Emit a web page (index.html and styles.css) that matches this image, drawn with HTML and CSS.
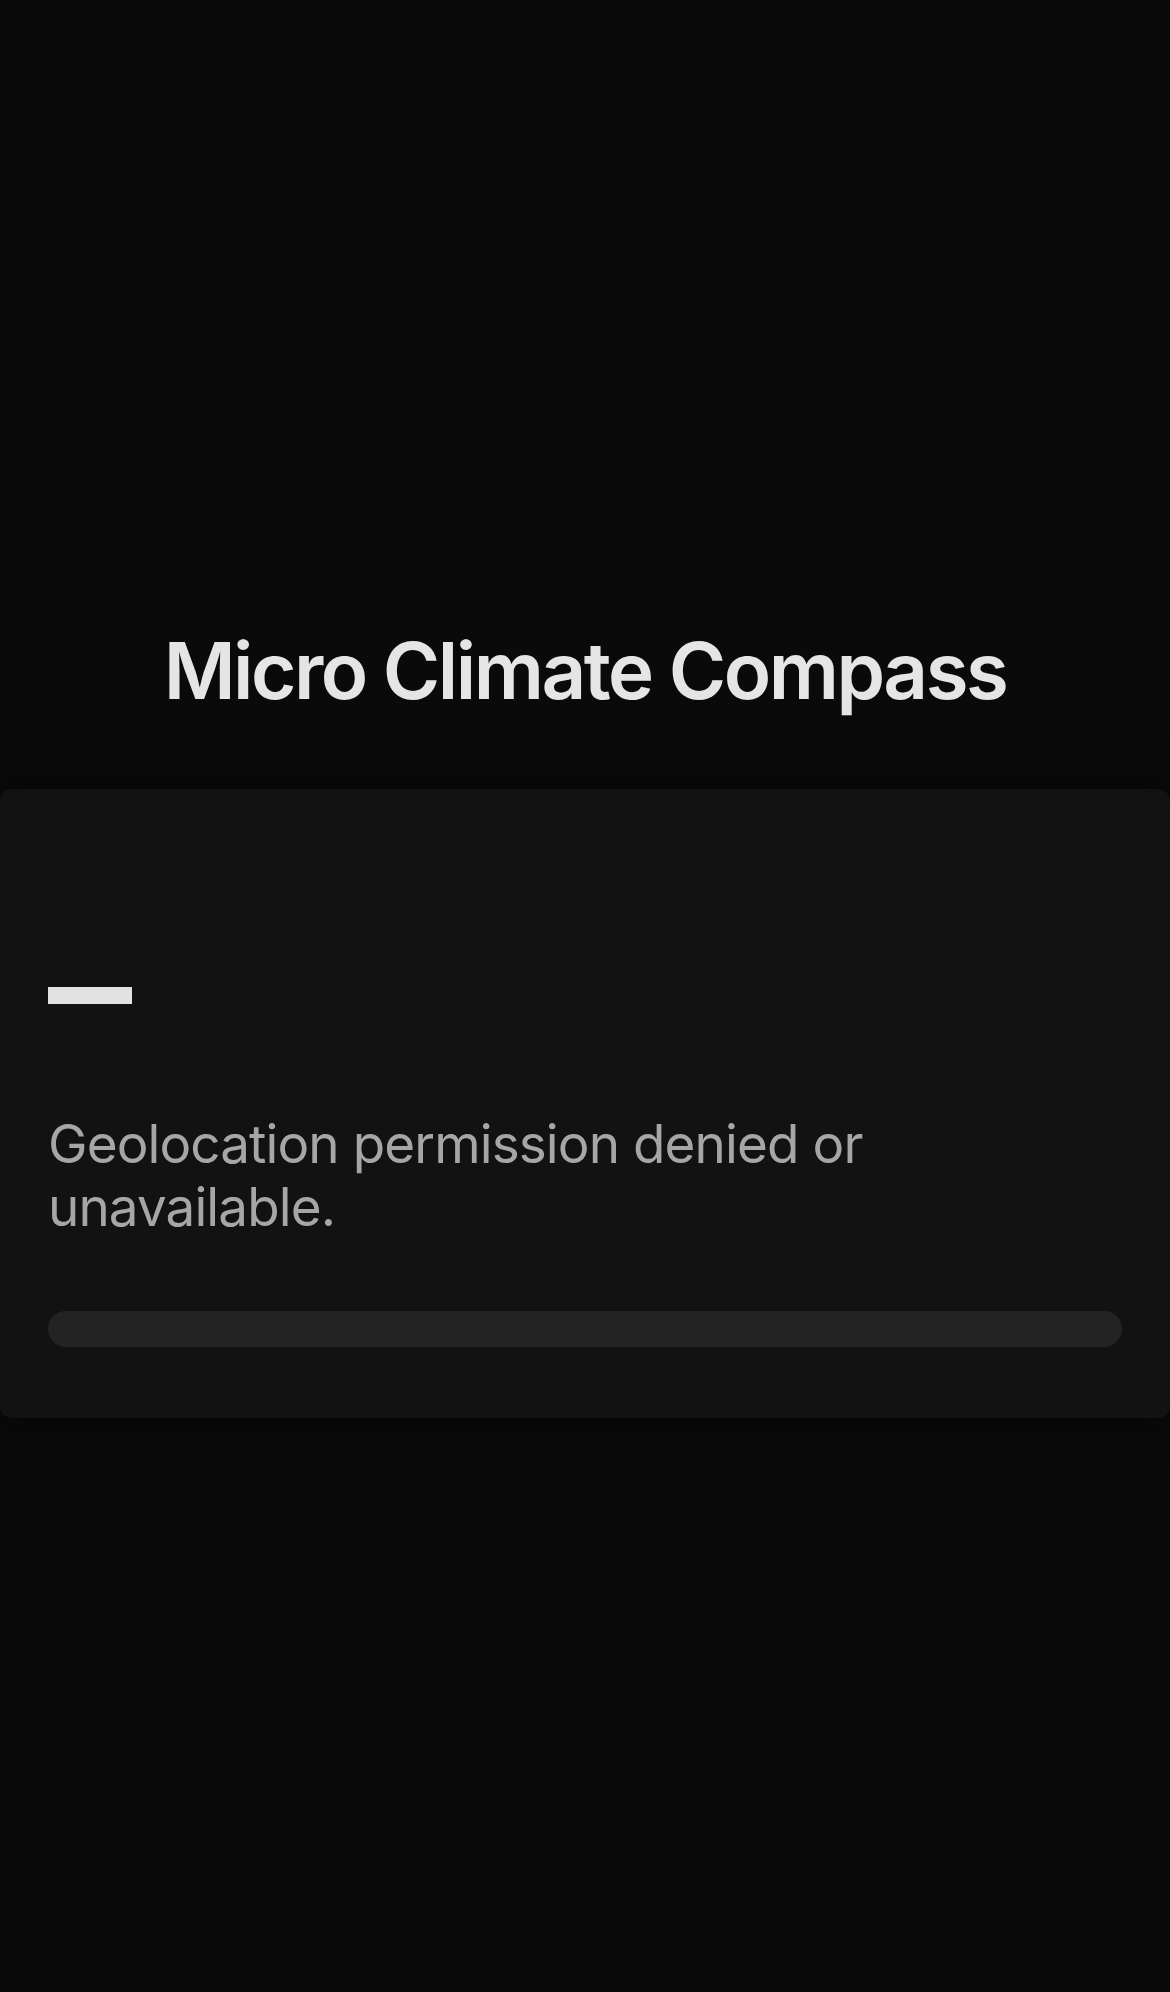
FILE: index.html
```html
<!DOCTYPE html>
<html lang="en">
<head>
<meta charset="utf-8">
<title>Micro Climate Compass</title>
<link rel="stylesheet" href="styles.css">
</head>
<body>
<main class="app">
  <header class="header">
    <h1 class="title">Micro Climate Compass</h1>
  </header>
  <section class="card">
    <div class="reading">
      <div class="dash"></div>
    </div>
    <p class="status">Geolocation permission denied or unavailable.</p>
    <div class="bar"></div>
  </section>
</main>
</body>
</html>
```
FILE: styles.css
```css
html, body {
  margin: 0;
  padding: 0;
  background: #0a0a0a;
}
body {
  min-height: 1992px;
  font-family: Inter, "Noto Sans", "Liberation Sans", sans-serif;
}
.app {
  display: flex;
  flex-direction: column;
  padding-top: 624px;
}
.header {
  display: flex;
  justify-content: center;
  margin-bottom: 71px;
}
.title {
  margin: 0;
  font-size: 78px;
  line-height: 1.2;
  font-weight: 600;
  letter-spacing: -2.5px;
  color: #e5e5e5;
}
.card {
  background: #121212;
  border-radius: 12px;
  padding: 72px 48px 71px;
  box-shadow: 0 0 40px rgba(0, 0, 0, 0.55);
  display: flex;
  flex-direction: column;
}
.reading {
  padding-top: 126px;
}
.dash {
  width: 84px;
  height: 17px;
  background: #e2e2e2;
}
.status {
  margin: 109px 0 0;
  font-size: 53px;
  line-height: 1.2;
  font-weight: 400;
  letter-spacing: -0.9px;
  color: #a6a6a6;
}
.bar {
  margin-top: 71px;
  height: 36px;
  border-radius: 18px;
  background: #232323;
}
```
